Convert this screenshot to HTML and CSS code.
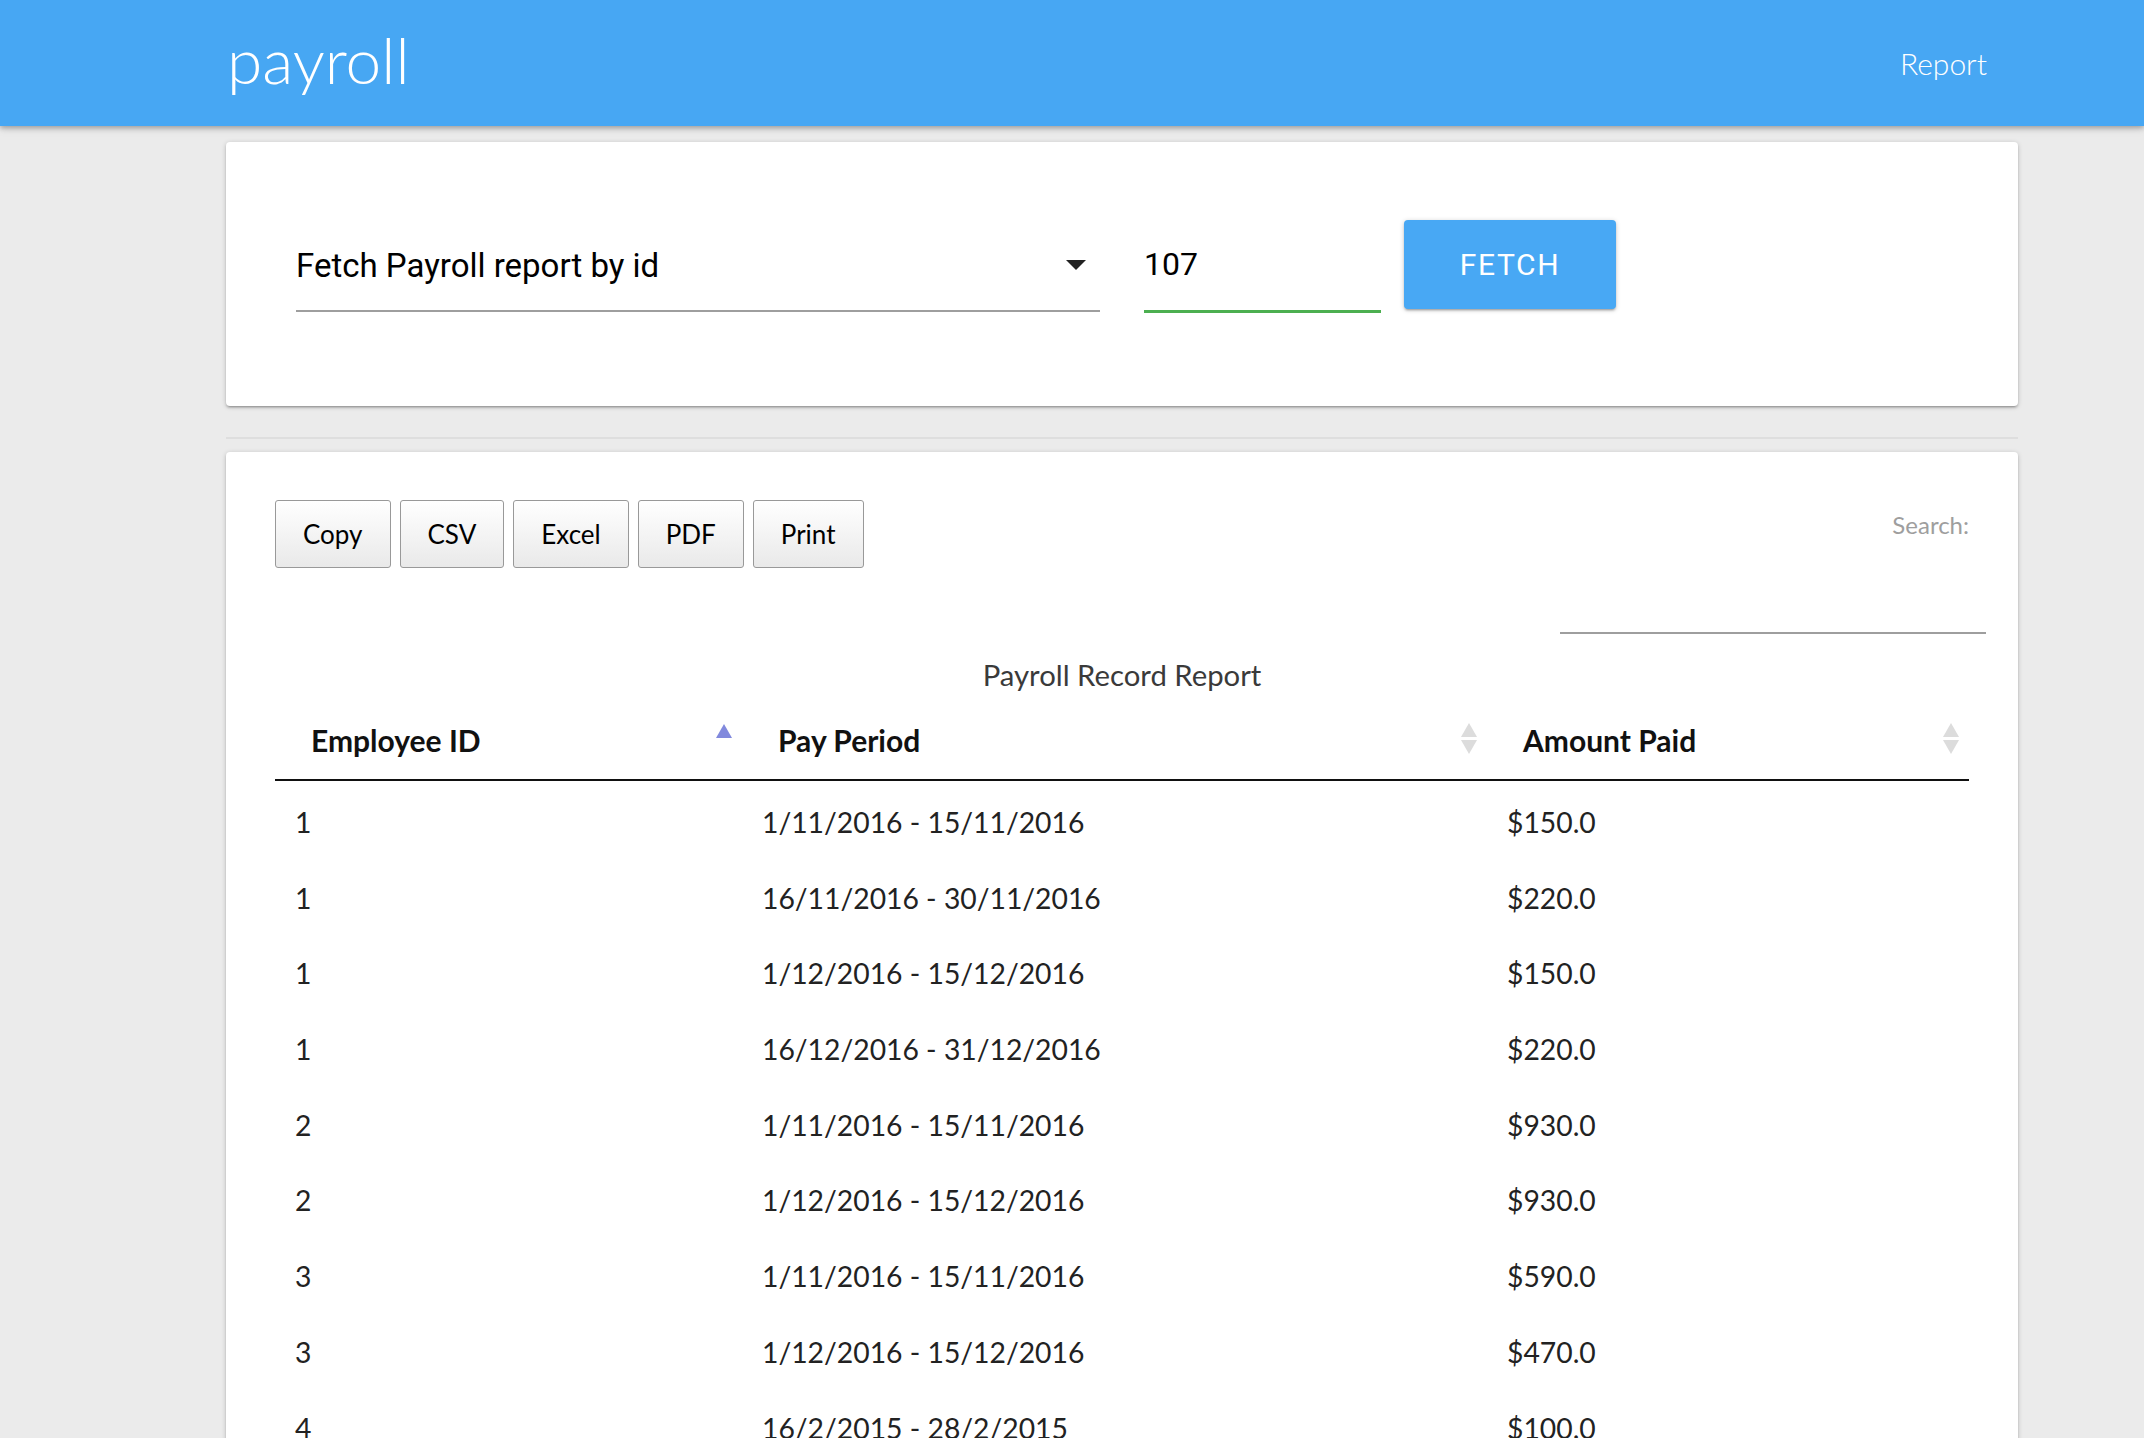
FILE: index.html
```html
<!DOCTYPE html>
<html lang="en">
<head>
<meta charset="utf-8">
<title>payroll</title>
<link rel="stylesheet" href="styles.css">
</head>
<body>
<nav class="topbar">
  <a class="brand" href="#">payroll</a>
  <a class="nav-link" href="#">Report</a>
</nav>
<main class="container">
  <section class="card fetch-card">
    <div class="fetch-row">
      <div class="select">
        <span class="select-value">Fetch Payroll report by id</span>
        <span class="caret"></span>
      </div>
      <div class="id-input">107</div>
      <button class="fetch-btn" type="button">FETCH</button>
    </div>
  </section>
  <hr class="divider">
  <section class="card report-card">
    <div class="toolbar">
      <div class="export-buttons">
        <button class="dt-btn" type="button">Copy</button>
        <button class="dt-btn" type="button">CSV</button>
        <button class="dt-btn" type="button">Excel</button>
        <button class="dt-btn" type="button">PDF</button>
        <button class="dt-btn" type="button">Print</button>
      </div>
      <div class="filter">
        <span class="filter-label">Search:</span>
        <div class="filter-input"></div>
      </div>
    </div>
    <table class="report">
      <caption>Payroll Record Report</caption>
      <colgroup>
        <col class="col-id">
        <col class="col-period">
        <col class="col-amount">
      </colgroup>
      <thead>
        <tr>
          <th class="sort-asc">Employee ID</th>
          <th class="sortable">Pay Period</th>
          <th class="sortable">Amount Paid</th>
        </tr>
      </thead>
      <tbody>
        <tr><td>1</td><td>1/11/2016 - 15/11/2016</td><td>$150.0</td></tr>
        <tr><td>1</td><td>16/11/2016 - 30/11/2016</td><td>$220.0</td></tr>
        <tr><td>1</td><td>1/12/2016 - 15/12/2016</td><td>$150.0</td></tr>
        <tr><td>1</td><td>16/12/2016 - 31/12/2016</td><td>$220.0</td></tr>
        <tr><td>2</td><td>1/11/2016 - 15/11/2016</td><td>$930.0</td></tr>
        <tr><td>2</td><td>1/12/2016 - 15/12/2016</td><td>$930.0</td></tr>
        <tr><td>3</td><td>1/11/2016 - 15/11/2016</td><td>$590.0</td></tr>
        <tr><td>3</td><td>1/12/2016 - 15/12/2016</td><td>$470.0</td></tr>
        <tr><td>4</td><td>16/2/2015 - 28/2/2015</td><td>$100.0</td></tr>
      </tbody>
    </table>
  </section>
</main>
</body>
</html>
```
FILE: styles.css
```css
* { box-sizing: border-box; }

html, body {
  margin: 0;
  padding: 0;
}

body {
  background: #ebebeb;
  font-family: "Lato", "Liberation Sans", sans-serif;
  color: #222;
}

.topbar {
  height: 126px;
  background: #47a7f3;
  display: flex;
  align-items: center;
  justify-content: space-between;
  padding: 0 157px 0 227px;
  box-shadow: 0 2px 5px rgba(0, 0, 0, 0.28), 0 2px 10px rgba(0, 0, 0, 0.1);
  position: relative;
  z-index: 2;
}

.brand {
  color: #fff;
  text-decoration: none;
  font-family: "Lato", sans-serif;
  font-weight: 300;
  font-size: 64px;
  line-height: 1;
  margin-top: -6px;
}

.nav-link {
  color: #fff;
  text-decoration: none;
  font-family: "Lato", sans-serif;
  font-weight: 300;
  font-size: 30px;
  line-height: 1;
}

.container {
  margin-left: 226px;
  width: 1792px;
  padding-top: 16px;
}

.card {
  background: #fff;
  border-radius: 4px;
  box-shadow: 0 2px 2px 0 rgba(0, 0, 0, 0.14), 0 3px 1px -2px rgba(0, 0, 0, 0.12), 0 1px 5px 0 rgba(0, 0, 0, 0.2);
}

.fetch-card {
  height: 264px;
  padding: 78px 70px 0;
}

.fetch-row {
  display: flex;
  align-items: flex-start;
}

.select {
  width: 804px;
  height: 92px;
  border-bottom: 2px solid #9e9e9e;
  display: flex;
  align-items: center;
  justify-content: space-between;
  font-family: "Roboto", sans-serif;
  font-size: 33px;
  color: #000;
  padding-right: 14px;
}

.caret {
  width: 0;
  height: 0;
  border-left: 10px solid transparent;
  border-right: 10px solid transparent;
  border-top: 10px solid #222;
}

.id-input {
  margin-left: 44px;
  width: 237px;
  height: 93px;
  border-bottom: 3px solid #4caf50;
  display: flex;
  align-items: center;
  font-family: "Roboto", sans-serif;
  font-size: 32px;
  color: #000;
  padding-bottom: 2px;
}

.fetch-btn {
  margin-left: 23px;
  width: 212px;
  height: 89px;
  border: none;
  border-radius: 4px;
  background: #48a8f4;
  color: #fff;
  font-family: "Roboto", sans-serif;
  font-size: 30px;
  letter-spacing: 1.6px;
  box-shadow: 0 2px 2px 0 rgba(0, 0, 0, 0.14), 0 3px 1px -2px rgba(0, 0, 0, 0.12), 0 1px 5px 0 rgba(0, 0, 0, 0.2);
  padding: 0;
}

.divider {
  border: none;
  height: 2px;
  background: #dedede;
  margin: 31px 0 13px;
}

.report-card {
  padding: 48px 49px 40px;
}

.toolbar {
  display: flex;
  justify-content: space-between;
  align-items: flex-start;
  margin-right: -17px;
}

.export-buttons {
  display: flex;
}

.dt-btn {
  height: 68px;
  padding: 0 27px;
  margin-right: 9px;
  border: 1px solid #999;
  border-radius: 3px;
  background: linear-gradient(to bottom, #ffffff 0%, #e9e9e9 100%);
  font-family: "Lato", sans-serif;
  font-size: 26px;
  color: #000;
}

.filter {
  width: 426px;
  margin-top: 10px;
}

.filter-label {
  display: block;
  text-align: right;
  padding-right: 17px;
  font-size: 24px;
  line-height: 30px;
  color: #9e9e9e;
}

.filter-input {
  height: 94px;
  border-bottom: 2px solid #9e9e9e;
}

.report {
  width: 1694px;
  border-collapse: collapse;
  table-layout: fixed;
}

.report caption {
  padding-top: 19px;
  line-height: 44px;
  font-size: 29.3px;
  color: #3a3a3a;
  text-align: center;
}

.col-id { width: 467px; }
.col-period { width: 745px; }
.col-amount { width: 482px; }

.report th {
  position: relative;
  text-align: left;
  padding: 20px 36px 16px;
  line-height: 46px;
  font-size: 30px;
  font-weight: 700;
  color: #111;
  border-bottom: 2px solid #111;
}

.report th::before,
.report th::after {
  content: "";
  position: absolute;
  right: 10px;
  width: 0;
  height: 0;
  border-left: 8px solid transparent;
  border-right: 8px solid transparent;
}

.report th.sortable::before {
  top: 26px;
  border-bottom: 14px solid #dcdcdc;
}

.report th.sortable::after {
  top: 43px;
  border-top: 14px solid #dcdcdc;
}

.report th.sort-asc::before {
  top: 27px;
  border-bottom: 14px solid #8189dd;
}

.report th.sort-asc::after {
  display: none;
}

.report td {
  padding: 19px 20px 12.7px;
  line-height: 44px;
  font-size: 28.3px;
  color: #222;
}
```
